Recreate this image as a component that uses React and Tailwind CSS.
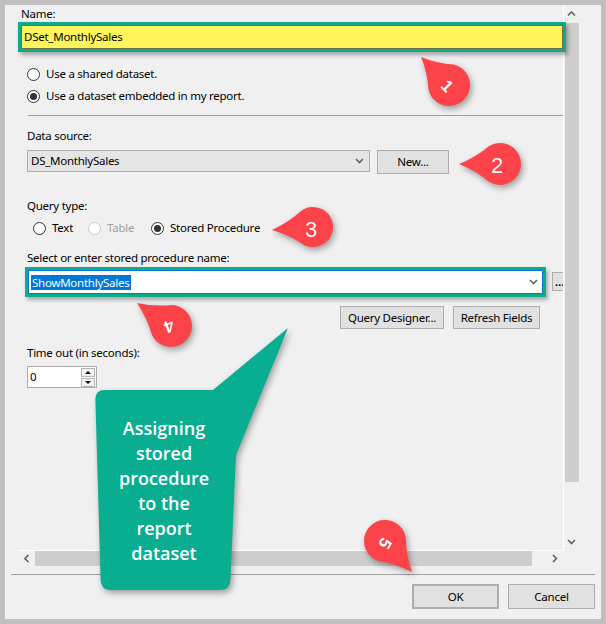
import React from "react";

const FONT = "font-['Noto_Sans',sans-serif]";

function pinPath(cx, cy, r, tx, ty) {
  const dx = tx - cx;
  const dy = ty - cy;
  const d = Math.hypot(dx, dy);
  const a = Math.atan2(dy, dx);
  const b = Math.acos(r / d);
  const p1 = [cx + r * Math.cos(a + b), cy + r * Math.sin(a + b)];
  const p2 = [cx + r * Math.cos(a - b), cy + r * Math.sin(a - b)];
  // pull the side curves a little toward the axis
  const ax = cx + (dx / d) * (d * 0.55);
  const ay = cy + (dy / d) * (d * 0.55);
  const c1 = [(p1[0] + tx) / 2 * 0.7 + ax * 0.3, (p1[1] + ty) / 2 * 0.7 + ay * 0.3];
  const c2 = [(p2[0] + tx) / 2 * 0.7 + ax * 0.3, (p2[1] + ty) / 2 * 0.7 + ay * 0.3];
  return `M${tx} ${ty} Q${c1[0]} ${c1[1]} ${p1[0]} ${p1[1]} A${r} ${r} 0 1 1 ${p2[0]} ${p2[1]} Q${c2[0]} ${c2[1]} ${tx} ${ty} Z`;
}

const pins = [
  { n: "1", cx: 449, cy: 85, r: 21, tx: 421, ty: 57, nx: 447, ny: 86, rot: 45, size: 17, bold: true },
  { n: "2", cx: 500, cy: 164, r: 21, tx: 459, ty: 164, nx: 497, ny: 165, rot: 0, size: 22 },
  { n: "3", cx: 313, cy: 227, r: 20, tx: 272, ty: 230, nx: 311, ny: 229, rot: 0, size: 22 },
  { n: "4", cx: 171, cy: 326, r: 21, tx: 137, ty: 303, nx: 169, ny: 326, rot: 160, size: 17, bold: true },
  { n: "5", cx: 385, cy: 541, r: 21, tx: 412, ty: 572, nx: 385, ny: 543, rot: 120, size: 17, bold: true },
];

function Radio({ checked, disabled, label, className = "" }) {
  return (
    <div className={"flex items-center h-4 " + className}>
      <span
        className={`w-[13px] h-[13px] shrink-0 rounded-full border bg-white flex items-center justify-center ${
          disabled ? "border-[#cccccc]" : "border-[#333333]"
        }`}
      >
        {checked && <span className="w-[7px] h-[7px] rounded-full bg-[#333333]" />}
      </span>
      <span className={`ml-[6px] whitespace-nowrap ${disabled ? "text-[#a0a0a0]" : "text-black"}`}>{label}</span>
    </div>
  );
}

function Chevron({ dir = "down", className = "" }) {
  const pts = {
    down: "1,1 4.5,4.5 8,1",
    up: "1,4.5 4.5,1 8,4.5",
    left: "4.5,1 1,4.5 4.5,8",
    right: "1,1 4.5,4.5 1,8",
  }[dir];
  const vert = dir === "down" || dir === "up";
  return (
    <svg width={vert ? 9 : 6} height={vert ? 6 : 9} viewBox={vert ? "0 0 9 6" : "0 0 6 9"} className={className}>
      <polyline points={pts} fill="none" stroke="#606060" strokeWidth="1.6" />
    </svg>
  );
}

function Button({ children, className = "" }) {
  return (
    <div
      className={
        "flex items-center justify-center bg-[#e1e1e1] border border-[#adadad] text-black whitespace-nowrap " + className
      }
    >
      {children}
    </div>
  );
}

export default function App() {
  return (
    <div className={`relative w-[606px] h-[624px] bg-[#bfbfbf] p-[5px] text-[11.5px] tracking-[-0.25px] leading-4 ${FONT}`}>
      <div className="h-[614px] bg-[#f0f0f0] flex flex-col">
        {/* scrollable dataset properties */}
        <div className="ml-[13px] grid grid-cols-[546px_15px] grid-rows-[546px_15px] w-[561px]">
          <div className="border-r border-b border-white flex flex-col">
            <div className="pl-[3px] pt-[1px] h-4 text-black">Name:</div>
            <div className="relative z-10 mt-[1px] w-[548px] h-[30px] border-[3px] border-[#0fa98b] shadow-[2px_3px_4px_rgba(0,0,0,0.3)]">
              <div className="h-full bg-[#fff459] border border-[#6f6d4a] flex items-center pl-[2px] text-black">
                DSet_MonthlySales
              </div>
            </div>
            <Radio label="Use a shared dataset." className="mt-[14px] ml-[9px]" />
            <Radio checked label="Use a dataset embedded in my report." className="mt-[6px] ml-[9px]" />
            <div className="mt-[11px] ml-[10px] h-px bg-[#a0a0a0]" />

            <div className="mt-[12px] ml-[9px] h-4 text-black">Data source:</div>
            <div className="mt-[6px] ml-[9px] flex items-start h-6">
              <div className="w-[343px] h-[22px] bg-[#e5e5e5] border border-[#adadad] flex items-center justify-between pl-[3px] pr-[5px] text-black">
                <span>DS_MonthlySales</span>
                <Chevron />
              </div>
              <Button className="ml-[7px] w-[72px] h-6">New...</Button>
            </div>

            <div className="mt-[24px] ml-[9px] h-4 text-black">Query type:</div>
            <div className="mt-[6px] ml-[15px] flex h-4">
              <Radio label="Text" className="w-[55px]" />
              <Radio disabled label="Table" className="w-[63px]" />
              <Radio checked label="Stored Procedure" />
            </div>

            <div className="mt-[14px] ml-[9px] h-4 text-black">Select or enter stored procedure name:</div>
            <div className="mt-[1px] ml-[7px] flex items-start h-[30px]">
              <div className="relative z-10 w-[522px] h-[30px] border-[3px] border-[#0fa98b] shadow-[2px_3px_4px_rgba(0,0,0,0.3)]">
                <div className="h-full bg-white border border-[#0078d7] flex items-center justify-between pl-[2px] pr-[4px]">
                  <span className="bg-[#0078d7] text-white px-[1px] leading-[15px]">ShowMonthlySales</span>
                  <Chevron />
                </div>
              </div>
              <div className="mt-[5px] ml-[6px] w-[11px] h-[19px] border-l border-t border-b border-[#adadad] bg-[#e1e1e1] overflow-hidden flex items-center pl-[2px] text-[11px] font-bold text-black">
                …
              </div>
            </div>
            <div className="mt-[9px] ml-[322px] flex h-[23px]">
              <Button className="w-[104px] h-[23px]">Query Designer...</Button>
              <Button className="ml-[9px] w-[87px] h-[23px]">Refresh Fields</Button>
            </div>

            <div className="mt-[16px] ml-[9px] h-4 text-black">Time out (in seconds):</div>
            <div className="mt-[5px] ml-[9px] w-[70px] h-[22px] bg-white border border-[#acacac] flex items-center justify-between pl-[2px] pr-[1px]">
              <span className="text-black">0</span>
              <div className="flex flex-col gap-px">
                <div className="w-[14px] h-[9px] border border-[#b5b5b5] bg-[#f3f3f3] flex items-center justify-center">
                  <span className="w-0 h-0 border-l-[3px] border-r-[3px] border-b-[3px] border-l-transparent border-r-transparent border-b-black" />
                </div>
                <div className="w-[14px] h-[9px] border border-[#b5b5b5] bg-[#f3f3f3] flex items-center justify-center">
                  <span className="w-0 h-0 border-l-[3px] border-r-[3px] border-t-[3px] border-l-transparent border-r-transparent border-t-black" />
                </div>
              </div>
            </div>
          </div>

          {/* vertical scrollbar */}
          <div className="flex flex-col items-center">
            <div className="h-[18px] flex items-center justify-center">
              <Chevron dir="up" />
            </div>
            <div className="ml-px w-[14px] h-[459px] bg-[#cdcdcd]" />
            <div className="flex-1 flex items-end justify-center pb-[6px]">
              <Chevron dir="down" />
            </div>
          </div>

          {/* horizontal scrollbar */}
          <div className="flex items-center h-[15px]">
            <div className="w-[17px] flex justify-center">
              <Chevron dir="left" />
            </div>
            <div className="w-[497px] h-[15px] bg-[#cdcdcd]" />
            <div className="flex-1 flex justify-end pr-[6px]">
              <Chevron dir="right" />
            </div>
          </div>
          <div />
        </div>

        <div className="mt-[8px] mx-[6px] h-px bg-[#a0a0a0]" />
        <div className="mt-[9px] mr-[6px] flex justify-end gap-[9px]">
          <Button className="w-[87px] h-[25px] border-2 border-[#0078d7]">OK</Button>
          <Button className="w-[87px] h-[25px]">Cancel</Button>
        </div>
      </div>

      {/* annotations */}
      <svg
        width="606"
        height="624"
        viewBox="0 0 606 624"
        className="absolute left-0 top-0 pointer-events-none z-20 drop-shadow-[2px_3px_3px_rgba(0,0,0,0.35)]"
      >
        <path
          d="M105 390 L213 390 L288 328 L236 455 L230.4 580 Q230 590 220 590 L111 590 Q101 590 100.6 580 L95.4 400 Q95 390 105 390 Z"
          fill="#08ae8f"
        />
        {pins.map((p) => (
          <g key={p.n}>
            <path d={pinPath(p.cx, p.cy, p.r, p.tx, p.ty)} fill="#fd434a" />
            <text
              x={p.nx}
              y={p.ny}
              fill="white"
              fontSize={p.size}
              fontWeight={p.bold ? "bold" : "normal"}
              fontFamily="'Liberation Sans', Arial, sans-serif"
              textAnchor="middle"
              dominantBaseline="central"
              transform={`rotate(${p.rot} ${p.nx} ${p.ny})`}
            >
              {p.n}
            </text>
          </g>
        ))}
      </svg>
      <div className="absolute left-[99px] top-[416px] w-[130px] z-30 text-center text-white text-[18px] tracking-normal leading-[25px] font-semibold font-['Open_Sans',sans-serif] pointer-events-none">
        <div>Assigning</div>
        <div>stored</div>
        <div>procedure</div>
        <div>to the</div>
        <div>report</div>
        <div>dataset</div>
      </div>
    </div>
  );
}
